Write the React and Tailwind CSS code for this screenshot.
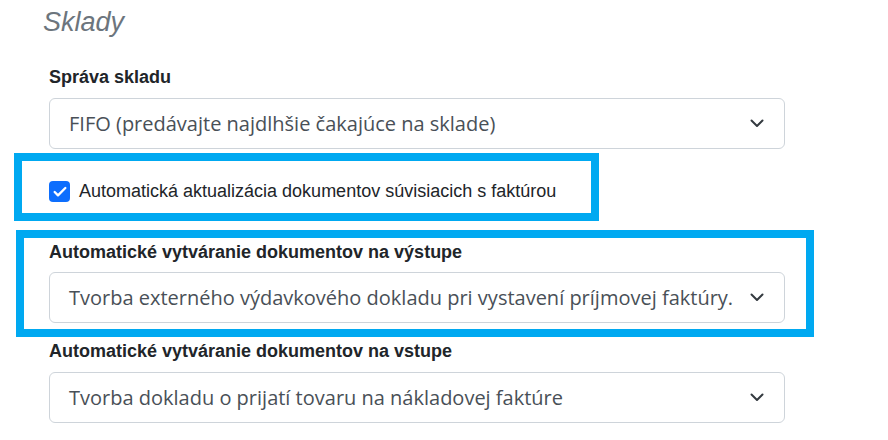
import { Check } from "lucide-react";

const Chevron = () => (
  <svg width="14" height="9" viewBox="0 0 14 9" className="shrink-0">
    <path d="M1.5 1.5 L7 7 L12.5 1.5" fill="none" stroke="#343a40" strokeWidth="2" strokeLinecap="round" strokeLinejoin="round" />
  </svg>
);

const Select = ({ value }) => (
  <div className="flex h-[51px] w-[736px] items-center justify-between rounded-[6px] border border-[#ced4da] bg-white pl-[19px] pr-[20px] text-[20px] text-[#495057] [font-family:'Open_Sans',sans-serif]">
    <span>{value}</span>
    <Chevron />
  </div>
);

const App = () => {
  return (
    <div className="h-[440px] w-[888px] overflow-hidden bg-white [font-family:'Liberation_Sans',Arial,sans-serif]">
      <h2 className="pl-[43px] pt-[7px] text-[27px] italic leading-[31px] text-[#6c757d]">Sklady</h2>

      <div className="pl-[49px]">
        <div className="mt-[29px] mb-[10px] text-[18px] font-bold leading-[21px] text-[#212529]">
          Správa skladu
        </div>
        <Select value="FIFO (predávajte najdlhšie čakajúce na sklade)" />

        <div className="ml-[-35px] mt-[4px] h-[68px] w-[585px] border-8 border-[#00a9f1] pl-[27px] pt-[20px]">
          <label className="flex items-center gap-[9px] text-[18px] leading-[21px] text-[#212529]">
            <span className="flex h-[21px] w-[21px] items-center justify-center rounded-[4px] bg-[#0d6efd]">
              <Check size={16} strokeWidth={3.5} color="white" />
            </span>
            Automatická aktualizácia dokumentov súvisiacich s faktúrou
          </label>
        </div>

        <div className="ml-[-33px] mt-[9px] h-[107px] w-[798px] border-8 border-[#00a9f1] pl-[25px] pt-[4px]">
          <div className="text-[18px] font-bold leading-[21px] text-[#212529]">
            Automatické vytváranie dokumentov na výstupe
          </div>
          <div className="mt-[9px]">
            <Select value="Tvorba externého výdavkového dokladu pri vystavení príjmovej faktúry." />
          </div>
        </div>

        <div className="mt-[4px] mb-[10px] text-[18px] font-bold leading-[21px] text-[#212529]">
          Automatické vytváranie dokumentov na vstupe
        </div>
        <Select value="Tvorba dokladu o prijatí tovaru na nákladovej faktúre" />
      </div>
    </div>
  );
};

export default App;
